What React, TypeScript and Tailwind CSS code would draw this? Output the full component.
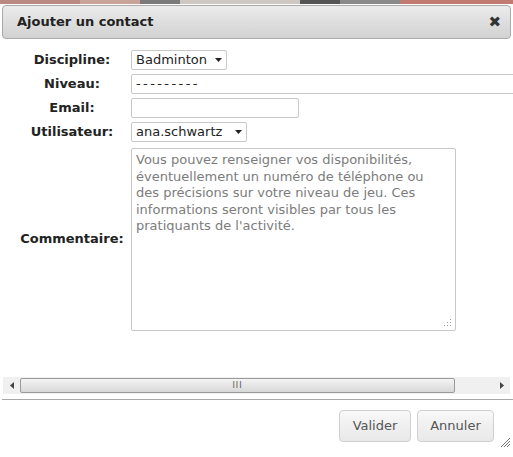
const font = { fontFamily: '"DejaVu Sans", Verdana, sans-serif' }

function Arrow() {
  return (
    <svg width="7" height="4" viewBox="0 0 7 4" className="ml-auto mr-[4px]">
      <path d="M0 0h7L3.5 4z" fill="#222" />
    </svg>
  )
}

const rows = [
  { label: 'Discipline:', kind: 'select', value: 'Badminton', w: 'w-[96px]' },
  { label: 'Niveau:', kind: 'input', value: '---------', w: 'w-[430px]' },
  { label: 'Email:', kind: 'input', value: '', w: 'w-[168px]' },
  { label: 'Utilisateur:', kind: 'select', value: 'ana.schwartz', w: 'w-[116px]' },
]

export default function App() {
  return (
    <div className="h-[457px] w-[513px] overflow-hidden bg-white text-[13px] text-[#222]" style={font}>
      <div className="flex h-[4px]">
        <div className="w-[80px] bg-[#b98a82]" />
        <div className="w-[60px] bg-[#c9a39a]" />
        <div className="w-[40px] bg-[#7a7a7a]" />
        <div className="w-[120px] bg-[#cfc7c2]" />
        <div className="w-[40px] bg-[#555555]" />
        <div className="w-[60px] bg-[#8a8a8a]" />
        <div className="flex-1 bg-[#c07a70]" />
      </div>

      <div className="mx-[2px] mt-[1px] flex h-[34px] items-center justify-between rounded-[4px] border border-[#aaaaaa] bg-gradient-to-b from-[#ebebeb] to-[#d2d2d2] pl-[14px] pr-[9px]">
        <span className="font-bold text-[#222]">Ajouter un contact</span>
        <span className="text-[15px] font-bold leading-none text-[#333]">✖</span>
      </div>

      <div className="h-[338px] overflow-hidden pt-[11px]">
        <div className="grid grid-cols-[112px_1fr] gap-x-[3px] gap-y-[4px] pl-[16px]">
          {rows.map((r) => (
            <div key={r.label} className="contents">
              <div className="flex h-[20px] items-center justify-center font-bold">{r.label}</div>
              <div className="flex h-[20px] items-center">
                <div className={`flex h-[20px] ${r.w} shrink-0 items-center rounded-[2px] border border-[#c8c8c8] pl-[4px]`}>
                  <span className={r.value.startsWith('-') ? 'tracking-[2.4px]' : ''}>{r.value}</span>
                  {r.kind === 'select' && <Arrow />}
                </div>
              </div>
            </div>
          ))}
          <div className="flex items-center justify-center font-bold">Commentaire:</div>
          <div className="relative mt-[2px] h-[183px] w-[325px] rounded-[2px] border border-[#c8c8c8] pl-[4px] pr-[20px] pt-[3px] leading-[16.5px] text-[#7c7c7c]">
            Vous pouvez renseigner vos disponibilités, éventuellement un numéro de téléphone ou des précisions sur votre niveau de jeu. Ces informations seront visibles par tous les pratiquants de l'activité.
            <svg width="8" height="8" viewBox="0 0 8 8" className="absolute bottom-[3px] right-[3px]">
              <g fill="#9a9a9a">
                <rect x="6" y="0" width="1" height="1" />
                <rect x="3" y="3" width="1" height="1" />
                <rect x="6" y="3" width="1" height="1" />
                <rect x="0" y="6" width="1" height="1" />
                <rect x="3" y="6" width="1" height="1" />
                <rect x="6" y="6" width="1" height="1" />
              </g>
            </svg>
          </div>
        </div>
      </div>

      <div className="mx-[3px] flex h-[17px] items-center bg-[#f0f0f0]">
        <div className="flex w-[17px] justify-center">
          <svg width="4" height="7" viewBox="0 0 4 7"><path d="M4 0v7L0 3.5z" fill="#444" /></svg>
        </div>
        <div className="flex h-[15px] w-[435px] items-center justify-center rounded-[2px] border border-[#9a9a9a] bg-gradient-to-b from-[#f4f4f4] to-[#d8d8d8]">
          <span className="text-[8px] leading-none tracking-[1px] text-[#555]">III</span>
        </div>
        <div className="flex-1" />
        <div className="flex w-[17px] justify-center">
          <svg width="4" height="7" viewBox="0 0 4 7"><path d="M0 0v7L4 3.5z" fill="#444" /></svg>
        </div>
      </div>

      <div className="ml-[2px] mt-[5px] border-t border-[#a8a8a8]" />

      <div className="relative flex justify-end gap-[6px] pr-[19px] pt-[10px]">
        <button className="h-[32px] w-[72px] rounded-[4px] border border-[#d0d0d0] bg-gradient-to-b from-[#f8f8f8] to-[#e8e8e8] text-[#555]">Valider</button>
        <button className="h-[32px] w-[77px] rounded-[4px] border border-[#d0d0d0] bg-gradient-to-b from-[#f8f8f8] to-[#e8e8e8] text-[#555]">Annuler</button>
        <svg width="11" height="11" viewBox="0 0 11 11" className="absolute right-[2px] top-[37px]">
          <g stroke="#777" strokeWidth="1">
            <path d="M1 10L10 1" />
            <path d="M4 10L10 4" />
            <path d="M7 10L10 7" />
          </g>
        </svg>
      </div>
    </div>
  )
}
